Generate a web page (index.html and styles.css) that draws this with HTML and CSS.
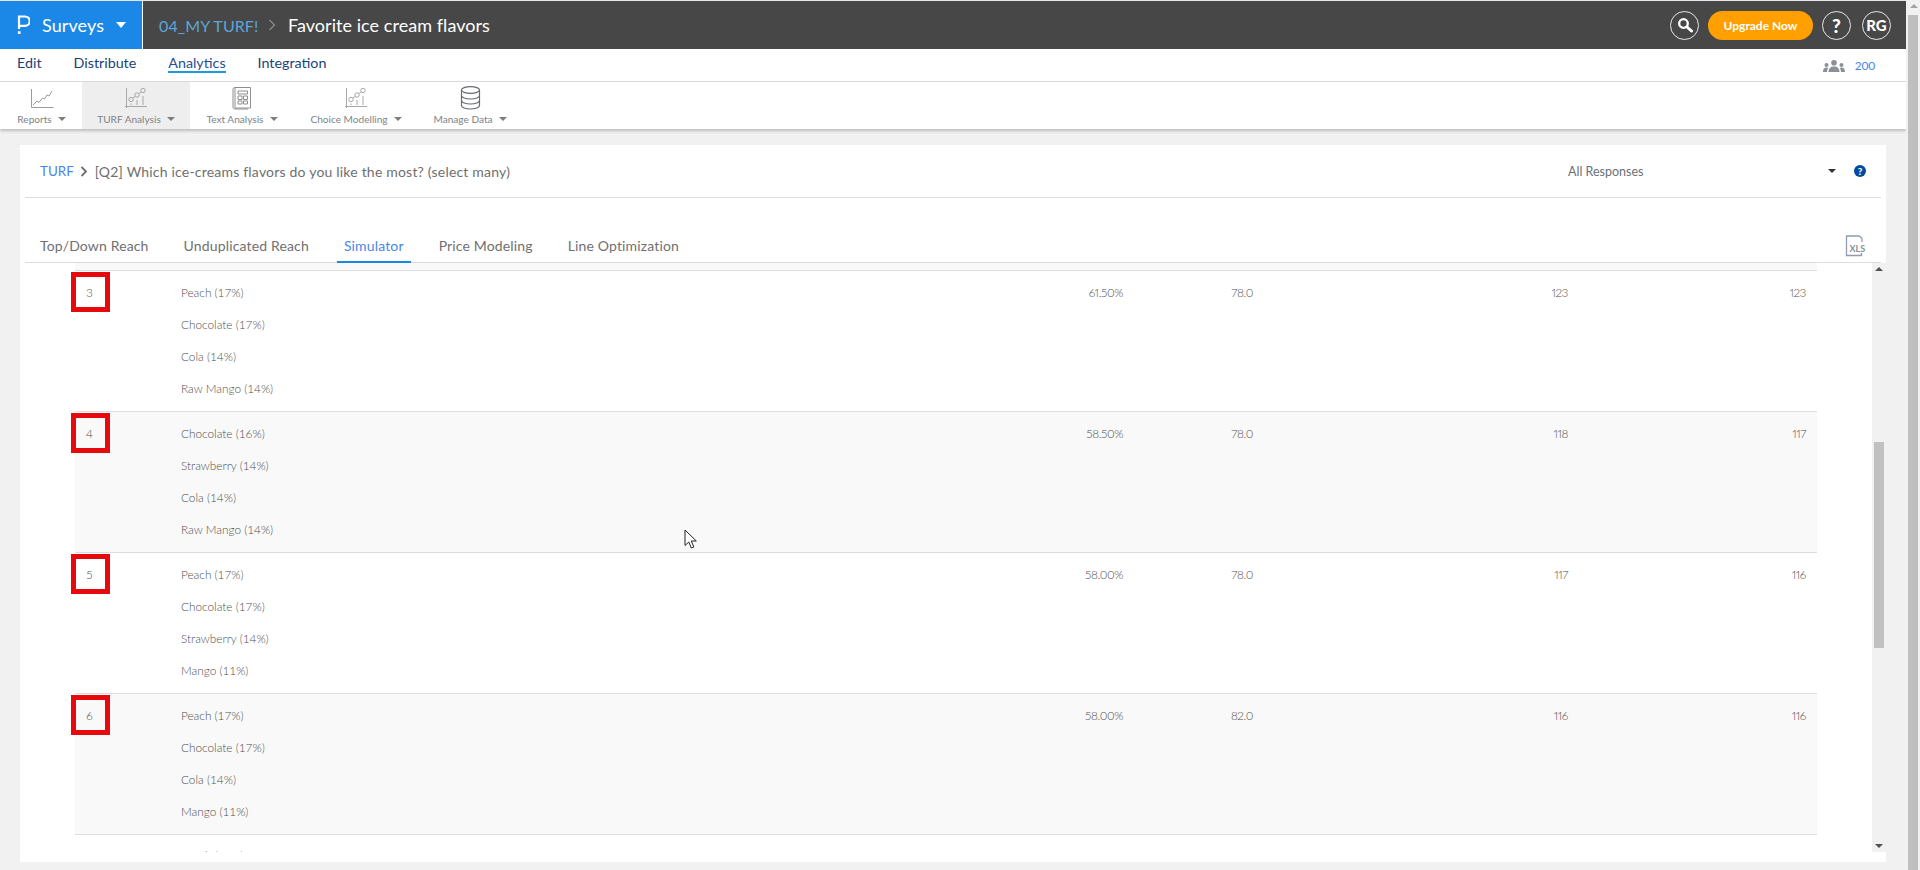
FILE: index.html
```html
<!DOCTYPE html>
<html lang="en">
<head>
<meta charset="utf-8">
<title>Favorite ice cream flavors - TURF Simulator</title>
<link rel="stylesheet" href="styles.css">
</head>
<body>
<div class="page">
  <div class="main">
    <header class="topbar">
      <div class="brand">
        <svg class="logo" width="13" height="20" viewBox="0 0 13 20"><path d="M2 14V1.500h6a4.500 4.500 0 0 1 0 9.400H2" fill="none" stroke="#fff" stroke-width="2.200"/><rect x=".900" y="16.200" width="2.600" height="2.800" fill="#fff"/></svg>
        <span class="brand-name">Surveys</span>
        <span class="caret caret-white"></span>
      </div>
      <div class="crumbs">
        <span class="crumb-project">04_MY TURF!</span>
        <svg class="crumb-chevron" width="8" height="12" viewBox="0 0 8 12"><path d="M1.500 1l5 5-5 5" fill="none" stroke="#8a8a8a" stroke-width="1.300"/></svg>
        <span class="crumb-title">Favorite ice cream flavors</span>
      </div>
      <div class="top-actions">
        <span class="round-btn">
          <svg width="16" height="16" viewBox="0 0 16 16"><circle cx="6.500" cy="6.500" r="4.300" fill="none" stroke="#fff" stroke-width="2.300"/><path d="M10 10l4.500 4" stroke="#fff" stroke-width="3" stroke-linecap="round"/></svg>
        </span>
        <span class="upgrade">Upgrade Now</span>
        <span class="round-btn round-q">?</span>
        <span class="round-btn round-rg">RG</span>
      </div>
    </header>

    <nav class="nav">
      <a class="nav-link">Edit</a>
      <a class="nav-link">Distribute</a>
      <a class="nav-link nav-active">Analytics</a>
      <a class="nav-link">Integration</a>
      <div class="nav-count">
        <svg width="22" height="12" viewBox="0 0 22 12" fill="#8b8f96"><circle cx="11" cy="2.800" r="2.800"/><path d="M5.500 12c0-3.500 2.200-5.500 5.500-5.500s5.500 2 5.500 5.500z"/><circle cx="3.500" cy="5" r="2"/><path d="M0 12c0-2.800 1.200-4.500 3.500-4.500 .8 0 1.300.2 1.800.5-.8 1-1.200 2.400-1.200 4z"/><circle cx="18.500" cy="5" r="2"/><path d="M22 12c0-2.800-1.200-4.500-3.500-4.500-.8 0-1.300.2-1.800.5.8 1 1.200 2.400 1.200 4z"/></svg>
        <span class="count-num">200</span>
      </div>
    </nav>

    <div class="toolbar">
      <div class="tool">
        <svg class="tool-icon" width="24" height="22" viewBox="0 0 24 22" fill="none" stroke="#9a9a9a"><path d="M1.500 2v18.500h22" /><path d="M3 18l4-4 2 1.500 3.500-4.500 2 1 2.500-4 2 1 3-5"/></svg>
        <div class="tool-label"><span>Reports</span><span class="caret caret-grey"></span></div>
      </div>
      <div class="tool tool-active">
        <svg class="tool-icon" width="24" height="22" viewBox="0 0 24 22" fill="none" stroke="#a8a8a8"><path d="M2.500 1v20M1 19.500h22"/><circle cx="7" cy="12.500" r="2.200"/><circle cx="13" cy="8" r="2.200"/><circle cx="19" cy="3.500" r="2.200"/><path d="M8.800 11l2.500-1.700M14.800 6.700l2.500-1.800M7 16.500v1.500M13 13v5M19 9v9"/></svg>
        <div class="tool-label"><span>TURF Analysis</span><span class="caret caret-grey"></span></div>
      </div>
      <div class="tool">
        <svg class="tool-icon" width="20" height="24" viewBox="0 0 20 24" fill="none" stroke="#8f8f8f"><path d="M3 1.500h15.500v20.500H3zM3 1.500C1.500 1.500 1 2.500 1 3.500v18c0 1 1 1.500 2 1.500h13"/><path d="M6 5h9.500v3H6zM6 10h4v3.500H6zM11.500 10h4v3.500h-4zM6 15h4v3H6zM11.500 15h4v3h-4z"/></svg>
        <div class="tool-label"><span>Text Analysis</span><span class="caret caret-grey"></span></div>
      </div>
      <div class="tool">
        <svg class="tool-icon" width="24" height="22" viewBox="0 0 24 22" fill="none" stroke="#a8a8a8"><path d="M2.500 1v20M1 19.500h22"/><circle cx="7" cy="12.500" r="2.200"/><circle cx="13" cy="8" r="2.200"/><circle cx="19" cy="3.500" r="2.200"/><path d="M8.800 11l2.500-1.700M14.800 6.700l2.500-1.800M7 16.500v1.500M13 13v5M19 9v9"/></svg>
        <div class="tool-label"><span>Choice Modelling</span><span class="caret caret-grey"></span></div>
      </div>
      <div class="tool">
        <svg class="tool-icon" width="21" height="24" viewBox="0 0 21 24" fill="none" stroke="#666c72" stroke-width="1.200"><ellipse cx="10.500" cy="4" rx="9" ry="3.300"/><path d="M1.500 4v15.500c0 2 4 3.500 9 3.500s9-1.500 9-3.500V4M1.500 9.500c0 2 4 3.500 9 3.500s9-1.500 9-3.500M1.500 14.500c0 2 4 3.500 9 3.500s9-1.500 9-3.500"/></svg>
        <div class="tool-label"><span>Manage Data</span><span class="caret caret-grey"></span></div>
      </div>
    </div>

    <section class="card">
      <div class="card-head">
        <a class="head-turf">TURF</a>
        <svg class="head-chevron" width="8" height="11" viewBox="0 0 8 11"><path d="M1.500 1l4.500 4.500-4.500 4.500" fill="none" stroke="#6d6d6d" stroke-width="1.800"/></svg>
        <span class="head-question">[Q2] Which ice-creams flavors do you like the most? (select many)</span>
        <div class="head-filter">
          <span class="filter-text">All Responses</span>
          <span class="caret caret-dark"></span>
          <span class="help-dot">?</span>
        </div>
      </div>

      <div class="tabs">
        <a class="tab">Top/Down Reach</a>
        <a class="tab">Unduplicated Reach</a>
        <a class="tab tab-active">Simulator</a>
        <a class="tab">Price Modeling</a>
        <a class="tab">Line Optimization</a>
        <svg class="xls" width="21" height="22" viewBox="0 0 21 22"><path d="M14.500 1H1.500v19.500h15V18M14.500 1l2.500 2.500V7" fill="none" stroke="#8f9db0" stroke-width="1.300"/><text x="4.500" y="17" class="xls-text">XLS</text></svg>
      </div>

      <div class="results">
        <div class="scroller">
          <div class="row-tail"></div>

          <div class="row">
            <div class="rank"><span class="rank-mark"></span>3</div>
            <ul class="flavors"><li>Peach (17%)</li><li>Chocolate (17%)</li><li>Cola (14%)</li><li>Raw Mango (14%)</li></ul>
            <div class="val">61.50%</div><div class="val">78.0</div><div class="val">123</div><div class="val">123</div>
          </div>
          <div class="row row-shade">
            <div class="rank"><span class="rank-mark"></span>4</div>
            <ul class="flavors"><li>Chocolate (16%)</li><li>Strawberry (14%)</li><li>Cola (14%)</li><li>Raw Mango (14%)</li></ul>
            <div class="val">58.50%</div><div class="val">78.0</div><div class="val">118</div><div class="val">117</div>
          </div>
          <div class="row">
            <div class="rank"><span class="rank-mark"></span>5</div>
            <ul class="flavors"><li>Peach (17%)</li><li>Chocolate (17%)</li><li>Strawberry (14%)</li><li>Mango (11%)</li></ul>
            <div class="val">58.00%</div><div class="val">78.0</div><div class="val">117</div><div class="val">116</div>
          </div>
          <div class="row row-shade">
            <div class="rank"><span class="rank-mark"></span>6</div>
            <ul class="flavors"><li>Peach (17%)</li><li>Chocolate (17%)</li><li>Cola (14%)</li><li>Mango (11%)</li></ul>
            <div class="val">58.00%</div><div class="val">82.0</div><div class="val">116</div><div class="val">116</div>
          </div>
          <div class="row row-cut">
            <div class="rank"></div>
            <ul class="flavors"><li>Peach (17%)</li></ul>
          </div>
        </div>
        <div class="inner-scroll">
          <span class="arrow-up"></span>
          <span class="inner-thumb"></span>
          <span class="arrow-down"></span>
        </div>
      </div>
    </section>
  </div>

  <aside class="page-scroll">
    <span class="arrow-up page-arrow"></span>
    <span class="page-thumb"></span>
  </aside>
</div>

<svg class="cursor" width="14" height="21" viewBox="0 0 14 21"><path d="M1 1v15.500l3.800-3.500 2.500 6 2.500-1-2.500-6h5z" fill="#fff" stroke="#222" stroke-width="1"/></svg>
</body>
</html>
```

FILE: styles.css
```css
* { box-sizing: border-box; }

html, body {
  margin: 0;
  height: 870px;
  overflow: hidden;
}

body {
  background: #f1f1f1;
  font-family: "Lato", "Noto Sans", sans-serif;
  color: #777;
}

ul { list-style: none; margin: 0; padding: 0; }

.page {
  display: flex;
  height: 870px;
}

.main {
  width: 1906px;
  flex: none;
}

/* carets */
.caret {
  display: inline-block;
  width: 0;
  height: 0;
  border-style: solid;
  border-color: transparent;
  border-bottom-width: 0;
}
.caret-white { border-width: 6px 5.500px 0; border-top-color: #fff; }
.caret-grey { border-width: 4px 4px 0; border-top-color: #7d7d7d; }
.caret-dark { border-width: 4px 4px 0; border-top-color: #333; }

/* top bar */
.topbar {
  margin-top: 1px;
  height: 48px;
  background: #474747;
  display: flex;
  align-items: center;
  box-shadow: 0 -1px 0 #e9e5ec;
}

.brand {
  width: 143px;
  height: 48px;
  flex: none;
  background: #1b87e6;
  border-right: 1px solid #fff;
  display: flex;
  align-items: center;
  padding-left: 17px;
  color: #fff;
}

.brand-name {
  font-size: 18px;
  margin-left: 12px;
  width: 74px;
  letter-spacing: .1px;
}

.crumbs {
  display: flex;
  align-items: center;
  padding-left: 16px;
  font-size: 18px;
}

.crumb-project { font-size: 16px; color: #5da5d8; letter-spacing: .1px; width: 101px; white-space: nowrap; }
.crumb-chevron { margin: 0 12px 0 8px; }
.crumb-title { color: #fff; letter-spacing: .05px; white-space: nowrap; }

.top-actions {
  margin-left: auto;
  margin-right: 15px;
  display: flex;
  align-items: center;
}

.round-btn {
  width: 29px;
  height: 29px;
  border: 1px solid #e6e6e6;
  border-radius: 50%;
  display: flex;
  align-items: center;
  justify-content: center;
  color: #fff;
  font-weight: 900;
}
.round-q { font-size: 19px; margin-left: 9px; }
.round-rg { font-size: 15px; margin-left: 11px; }

.upgrade {
  margin-left: 9px;
  width: 105px;
  height: 29px;
  border-radius: 15px;
  background: #ffa000;
  color: #fff;
  font-size: 12px;
  font-weight: 700;
  display: flex;
  align-items: center;
  justify-content: center;
}

/* nav */
.nav {
  height: 33px;
  background: #fff;
  border-bottom: 1px solid #ddd;
  display: flex;
  align-items: flex-start;
  padding: 5px 31px 0 17px;
  gap: 32px;
}

.nav-link {
  font-size: 14.300px;
  line-height: 16px;
  padding-top: 1px;
  color: #1c3f78;
  white-space: nowrap;
}

.nav-active {
  color: #25508f;
  border-bottom: 2px solid #1d9bd8;
}

.nav-count {
  margin-left: auto;
  display: flex;
  align-items: center;
  gap: 10px;
  padding-top: 4px;
}
.count-num { font-size: 12px; letter-spacing: -.2px; color: #4a86e8; }

/* toolbar */
.toolbar {
  height: 47px;
  background: #fff;
  display: grid;
  grid-template-columns: 81px 108px 104px 124px 104px;
  justify-content: start;
  box-shadow: 0 2px 3px rgba(0, 0, 0, .22);
  position: relative;
  padding-left: 1px;
}

.tool {
  display: flex;
  flex-direction: column;
  align-items: center;
  height: 47px;
}

.tool-active { background: #eee; }

.tool-icon { height: 24px; margin-top: 4px; display: block; }

.tool-label {
  margin-top: 2px;
  font-size: 10.100px;
  line-height: 14px;
  color: #7e8388;
  white-space: nowrap;
  display: flex;
  align-items: center;
  gap: 6px;
}

/* card */
.card {
  margin: 16px 0 0 20px;
  width: 1866px;
  height: 717px;
  background: #fff;
  display: flex;
  flex-direction: column;
}

.card-head {
  height: 53px;
  margin: 0 5px;
  padding: 0 0 0 15px;
  border-bottom: 1px solid #ddd;
  display: flex;
  align-items: center;
  font-size: 14px;
}

.head-turf { font-size: 13.400px; color: #4a86e8; }
.head-chevron { margin: 0 7px 0 6px; }
.head-question { color: #6f6f6f; white-space: nowrap; letter-spacing: .2px; }

.head-filter {
  margin-left: auto;
  display: flex;
  align-items: center;
  padding-right: 15px;
}

.filter-text { font-size: 12.500px; color: #6a7078; width: 260px; }

.help-dot {
  margin-left: 18px;
  width: 12px;
  height: 12px;
  border-radius: 50%;
  background: #004a9f;
  color: #fff;
  font-size: 10px;
  font-weight: 900;
  line-height: 12px;
  text-align: center;
}

.tabs {
  height: 65px;
  margin: 0 5px;
  padding-left: 15px;
  border-bottom: 1px solid #ddd;
  display: flex;
  align-items: flex-end;
  gap: 35px;
  position: relative;
}

.tab {
  font-size: 14px;
  line-height: 17px;
  padding-bottom: 8px;
  color: #707070;
  white-space: nowrap;
  letter-spacing: .15px;
  position: relative;
}

.tab-active { color: #4a86e8; }
.tab-active::after {
  content: "";
  position: absolute;
  left: -7px;
  right: -7px;
  bottom: -1px;
  height: 2px;
  background: #1b87e6;
}

.xls { position: absolute; right: 15px; bottom: 5px; }
.xls-text { font-size: 9px; font-weight: 700; fill: #8a8f96; font-family: "Lato", sans-serif; }

/* results */
.results {
  display: flex;
  height: 589px;
}

.scroller {
  width: 1852px;
  height: 589px;
  overflow: hidden;
  padding: 0 55px;
}

.row-tail {
  height: 7px;
  background: #f9f9f9;
}

.row {
  height: 141px;
  border-top: 1px solid #ddd;
  display: grid;
  grid-template-columns: 106px 600px 342px 130px 315px 238px;
  padding-top: 6px;
  font-size: 11.800px;
  font-weight: 300;
  line-height: 32px;
  color: #4f4f4f;
}

.row-shade { background: #f9f9f9; }
.row-cut { padding-top: 5px; }

.rank {
  position: relative;
  padding-left: 11px;
}

.rank-mark {
  position: absolute;
  left: -4px;
  top: -5px;
  width: 39px;
  height: 40px;
  border: 5px solid #e60a0f;
}

.val {
  text-align: right;
  letter-spacing: -.4px;
  font-variant-numeric: proportional-nums;
}

.inner-scroll {
  width: 14px;
  flex: none;
  background: #f1f1f1;
  position: relative;
}

.arrow-up, .arrow-down {
  position: absolute;
  left: 3px;
  width: 0;
  height: 0;
  border: 4px solid transparent;
}
.arrow-up { top: 4px; border-top-width: 0; border-bottom-color: #505050; }
.arrow-down { bottom: 4px; border-bottom-width: 0; border-top-color: #505050; }

.inner-thumb {
  position: absolute;
  left: 2px;
  top: 179px;
  width: 10px;
  height: 206px;
  background: #c1c1c1;
}

/* browser scrollbar */
.page-scroll {
  width: 14px;
  flex: none;
  background: #f1f1f1;
  position: relative;
}

.page-arrow {
  left: 4px;
  border-bottom-color: #a3a3a3;
}

.page-thumb {
  position: absolute;
  left: 2px;
  top: 15px;
  bottom: 0;
  width: 10px;
  background: #bfbfbf;
}

.cursor {
  position: absolute;
  left: 684px;
  top: 529px;
}
```
